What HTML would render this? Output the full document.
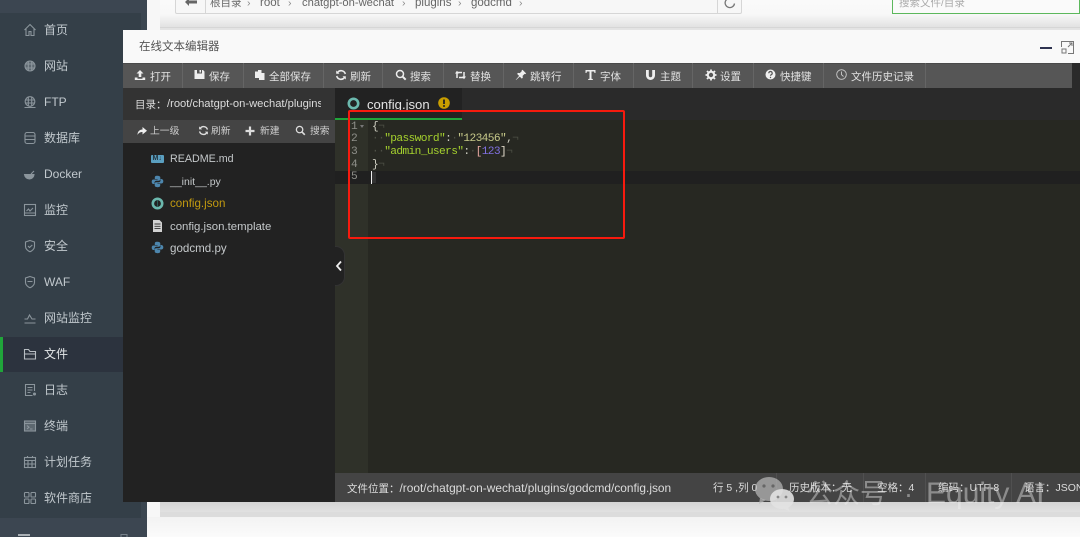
<!DOCTYPE html>
<html lang="zh"><head><meta charset="utf-8"><title>在线文本编辑器</title>
<style>
*{box-sizing:border-box}
html,body{margin:0;padding:0;width:1080px;height:537px;overflow:hidden;background:#fff}
body{position:relative;font-family:"Liberation Sans","Noto Sans CJK SC",sans-serif;filter:blur(.3px)}
.a,.t,svg{position:absolute}
.t{white-space:nowrap;line-height:14px}
.m{font-size:12px;color:#c2c9ce;left:44px}
.i{left:22px;margin-top:-1px;width:16px;height:16px;fill:none;stroke:#8b959c;stroke-width:1.1}
.b{font-size:10.5px;color:#e2e2e2;top:70px}
.s{top:63px;width:1px;height:25px;background:#656565}
.w{fill:#eee;stroke:none}
.f{font-size:11.6px;color:#c5c9cb;left:170px}
.c{font:11.2px/13px "Liberation Mono",monospace;letter-spacing:-.62px;left:372px;color:#cfcfc2}
.n{font:11.2px/13px "Liberation Mono",monospace;left:351px;color:#8f908a}
.st{font-size:10.5px;color:#dcdcdc;top:481px}
.d{color:#4e5046}
.x{font-size:10.5px;color:#888;top:-4px}
.tb{font-size:9.8px;color:#ccc;top:125px}
</style></head><body>

<!-- page background -->
<div class="a" style="left:147px;top:0;width:933px;height:537px;background:#f7f7f7"></div>
<div class="a" style="left:160px;top:0;width:920px;height:30px;background:linear-gradient(#fafafa 0,#f8f8f8 14px,#e2e2e2 27px,#e4e4e4 30px)"></div>
<div class="a" style="left:160px;top:27px;width:920px;height:1px;background:#d6d6d6"></div>
<div class="a" style="left:160px;top:502px;width:920px;height:11px;background:linear-gradient(#d4d4d4,#e2e2e2)"></div>
<div class="a" style="left:160px;top:512px;width:920px;height:5px;background:#dcdcdc"></div>
<div class="a" style="left:147px;top:517px;width:933px;height:20px;background:linear-gradient(#f3f3f3,#fbfbfb)"></div>

<!-- breadcrumbs -->
<div class="a" style="left:175px;top:-6px;width:567px;height:20px;background:#f7f7f7;border:1px solid #d6d6d6;border-radius:2px"></div>
<div class="a" style="left:205px;top:-6px;width:1px;height:20px;background:#d6d6d6"></div>
<div class="a" style="left:717px;top:-6px;width:1px;height:20px;background:#d6d6d6"></div>
<svg style="left:184px;top:-3px" width="14" height="10" viewBox="0 0 14 10"><path d="M1 5l4-4v2.500h8v3H5V9z" fill="#666"/></svg>
<div class="t" style="left:210px;top:-4px;font-size:10.500px;color:#666">根目录</div>
<div class="t x" style="left:247px">›</div>
<div class="t" style="left:260px;top:-4px;font-size:11.500px;color:#666">root</div>
<div class="t x" style="left:288px">›</div>
<div class="t" style="left:302px;top:-4px;font-size:11.200px;color:#666">chatgpt-on-wechat</div>
<div class="t x" style="left:402px">›</div>
<div class="t" style="left:415px;top:-4px;font-size:11.500px;color:#666">plugins</div>
<div class="t x" style="left:458px">›</div>
<div class="t" style="left:471px;top:-4px;font-size:11.500px;color:#666">godcmd</div>
<div class="t x" style="left:519px">›</div>
<svg style="left:723px;top:-4px" width="14" height="14" viewBox="0 0 14 14"><path d="M11.500 7.500A4.700 4.700 0 1 1 9.500 3" fill="none" stroke="#777" stroke-width="1.300"/></svg>
<div class="a" style="left:892px;top:-6px;width:188px;height:20px;background:#fafafa;border:1px solid #5cb85c"></div>
<div class="t" style="left:899px;top:-4px;font-size:10.500px;color:#aaa">搜索文件/目录</div>

<!-- sidebar -->
<div class="a" style="left:0;top:0;width:147px;height:537px;background:#343f48"></div>
<div class="a" style="left:0;top:0;width:147px;height:13px;background:#3c4651"></div>
<div class="a" style="left:141px;top:13px;width:6px;height:505px;background:#3b4650"></div>
<div class="a" style="left:0;top:518px;width:147px;height:19px;background:#3c4651"></div>
<div class="a" style="left:0;top:337px;width:147px;height:35px;background:#2c333e"></div>
<div class="a" style="left:0;top:337px;width:3px;height:35px;background:#20a53a"></div>
<div class="a" style="left:18px;top:534px;width:12px;height:2px;background:#aab0b5"></div>
<svg style="left:119px;top:533px" width="10" height="4" viewBox="0 0 10 4"><path d="M2 4V1.500h6V4" fill="none" stroke="#77818a"/></svg>

<svg class="i" style="top:23px" viewBox="0 0 16 16"><path d="M2.500 8L8 2.500 13.500 8M4 7v6.500h3v-4h2v4h3V7"/></svg>
<div class="t m" style="top:23px">首页</div>
<svg class="i" style="top:59px" viewBox="0 0 16 16"><circle cx="8" cy="8" r="5" fill="#5d6870"/><path d="M3 6h10M3 10h10M6.300 3v10M9.700 3v10"/></svg>
<div class="t m" style="top:59px">网站</div>
<svg class="i" style="top:95px" viewBox="0 0 16 16"><circle cx="8" cy="7.500" r="4.800"/><path d="M3 6h10M3 9h10M6.300 3v9M9.700 3v9M2.500 13.500h11"/></svg>
<div class="t m" style="top:95px">FTP</div>
<svg class="i" style="top:131px" viewBox="0 0 16 16"><rect x="3" y="2.500" width="10" height="11" rx="2"/><path d="M3 6h10M3 9.500h10"/></svg>
<div class="t m" style="top:131px">数据库</div>
<svg class="i" style="top:167px" viewBox="0 0 16 16"><path d="M2.500 8.500h9.500A4.800 4.800 0 0 1 7.500 13 5 5 0 0 1 2.500 8.500zM9 8l3-3" fill="#8b959c"/></svg>
<div class="t m" style="top:167px">Docker</div>
<svg class="i" style="top:203px" viewBox="0 0 16 16"><rect x="2.500" y="2.500" width="11" height="11"/><path d="M4.500 9l2-2 1.500 2 3-3M2.500 11h11"/></svg>
<div class="t m" style="top:203px">监控</div>
<svg class="i" style="top:239px" viewBox="0 0 16 16"><path d="M8 2.500l4.500 1.500v4.500c0 2.500-2.500 4.500-4.500 5.300-2-.8-4.500-2.800-4.500-5.300V4zM6 8l1.500 1.500L10.300 7"/></svg>
<div class="t m" style="top:239px">安全</div>
<svg class="i" style="top:275px" viewBox="0 0 16 16"><path d="M8 2.500l4.500 1.500v4.500c0 2.500-2.500 4.500-4.500 5.300-2-.8-4.500-2.800-4.500-5.300V4zM5.500 7.500h5"/></svg>
<div class="t m" style="top:275px">WAF</div>
<svg class="i" style="top:311px" viewBox="0 0 16 16"><path d="M2.500 9h3L7.500 5 10 9h3.500M2.500 13h11"/></svg>
<div class="t m" style="top:311px">网站监控</div>
<svg class="i" style="top:347px;stroke:#b8bec3" viewBox="0 0 16 16"><path d="M2.500 13V3.500h4L8 5.500h5.500V13zM2.500 8h11"/></svg>
<div class="t m" style="top:347px;color:#e4e7e9">文件</div>
<svg class="i" style="top:383px" viewBox="0 0 16 16"><path d="M12.500 9V2.500h-9v11h7M5.500 5.500h5M5.500 8h5M5.500 10.500h3"/><circle cx="12.500" cy="12" r="1" fill="#8b959c"/></svg>
<div class="t m" style="top:383px">日志</div>
<svg class="i" style="top:419px" viewBox="0 0 16 16"><rect x="2.500" y="3" width="11" height="10" fill="#5d6870"/><path d="M2.500 5.500h11M5 7.500L7 9.300 5 11M8 11h2.500"/></svg>
<div class="t m" style="top:419px">终端</div>
<svg class="i" style="top:455px" viewBox="0 0 16 16"><rect x="2.500" y="3.500" width="11" height="10"/><path d="M2.500 6.500h11M5.500 2v2M10.500 2v2M2.500 10h11M6 6.500v7M10 6.500v7"/></svg>
<div class="t m" style="top:455px">计划任务</div>
<svg class="i" style="top:491px" viewBox="0 0 16 16"><rect x="2.500" y="2.500" width="4.500" height="4.500" rx=".8"/><rect x="9" y="2.500" width="4.500" height="4.500" rx=".8"/><rect x="2.500" y="9" width="4.500" height="4.500" rx=".8"/><rect x="9" y="9" width="4.500" height="4.500" rx=".8"/></svg>
<div class="t m" style="top:491px">软件商店</div>

<!-- modal -->
<div class="a" style="left:123px;top:30px;width:957px;height:472px;background:#2a2a2a"></div>
<div class="a" style="left:123px;top:30px;width:957px;height:33px;background:#f9f9f9"></div>
<div class="t" style="left:139px;top:40px;font-size:11.500px;color:#555">在线文本编辑器</div>
<div class="a" style="left:1040px;top:47px;width:12px;height:2px;background:#2e3350"></div>
<svg style="left:1061px;top:41px" width="13" height="13" viewBox="0 0 13 13"><path d="M.5 6V.5h12v12H7M7 6l4-4M8 2h3v3" fill="none" stroke="#777"/><rect x="1" y="8" width="4" height="4" fill="none" stroke="#777"/></svg>

<!-- toolbar -->
<div class="a" style="left:123px;top:63px;width:949px;height:25px;background:#565656;border-top:1px solid #4a4a4a"></div>
<div class="a s" style="left:182px"></div><div class="a s" style="left:243px"></div><div class="a s" style="left:323px"></div><div class="a s" style="left:382px"></div><div class="a s" style="left:443px"></div><div class="a s" style="left:503px"></div><div class="a s" style="left:573px"></div><div class="a s" style="left:633px"></div><div class="a s" style="left:692px"></div><div class="a s" style="left:753px"></div><div class="a s" style="left:823px"></div><div class="a s" style="left:925px"></div>

<svg class="w" style="left:134px;top:69px" width="12" height="12" viewBox="0 0 12 12"><path d="M6 1l3.500 3.500H7.300V8H4.700V4.500H2.500zM.8 8.500H3.500V9.800h5V8.500h2.700V11H.8z"/></svg>
<div class="t b" style="left:150px">打开</div>
<svg class="w" style="left:194px;top:69px" width="11" height="11" viewBox="0 0 11 11"><path d="M.5 1H3v3.500h5V1h1l1.500 1.500V10H.5zM5.500 1h1.500v2.500H5.500z"/></svg>
<div class="t b" style="left:209px">保存</div>
<svg class="w" style="left:254px;top:69px" width="12" height="12" viewBox="0 0 12 12"><path d="M1 2.500h3V1h3.500v3H10.500v7H5V9H1z"/></svg>
<div class="t b" style="left:269px">全部保存</div>
<svg style="left:335px;top:69px" width="12" height="12" viewBox="0 0 12 12"><path d="M10.300 5A4.400 4.400 0 0 0 2.500 3.500M1.700 7a4.400 4.400 0 0 0 7.800 1.500" fill="none" stroke="#eee" stroke-width="1.500"/><path d="M1.200 1.500v3.300h3.300zM10.800 10.500V7.200H7.500z" fill="#eee"/></svg>
<div class="t b" style="left:350px">刷新</div>
<svg style="left:395px;top:69px" width="12" height="12" viewBox="0 0 12 12"><circle cx="5" cy="5" r="3.500" fill="none" stroke="#eee" stroke-width="1.500"/><path d="M7.700 7.700l3 3" stroke="#eee" stroke-width="2"/></svg>
<div class="t b" style="left:410px">搜索</div>
<svg style="left:454px;top:69px" width="13" height="12" viewBox="0 0 13 12"><path d="M3 9V3.500h5M10 3v5.500H5" fill="none" stroke="#eee" stroke-width="1.500"/><path d="M1 4.500h4L3 1.800zM12 7.500H8l2 2.700z" fill="#eee"/></svg>
<div class="t b" style="left:470px">替换</div>
<svg class="w" style="left:515px;top:69px" width="12" height="12" viewBox="0 0 12 12"><path d="M7.500.8l3.700 3.700-1 .6-.6-.2-2 2 .2 1.800-1 .9-2-2L1 11 .8 10.800l3.300-3.900-2-2 .9-1 1.800.2 2-2-.2-.6z"/></svg>
<div class="t b" style="left:530px">跳转行</div>
<svg class="w" style="left:585px;top:69px" width="11" height="12" viewBox="0 0 11 12"><path d="M.5 1h10v3h-1l-.4-1.500H6.500v7.200l1.300.3v1H3.200v-1l1.300-.3V2.500H1.900L1.500 4h-1z"/></svg>
<div class="t b" style="left:600px">字体</div>
<svg class="w" style="left:645px;top:69px" width="11" height="12" viewBox="0 0 11 12"><path d="M1 1h2.800v5.500a1.700 1.700 0 0 0 3.400 0V1H10v5.500a4.500 4.500 0 0 1-9 0z"/></svg>
<div class="t b" style="left:660px">主题</div>
<svg style="left:705px;top:69px" width="12" height="12" viewBox="0 0 12 12"><circle cx="6" cy="6" r="3.200" fill="none" stroke="#eee" stroke-width="2"/><path d="M6 .5v2M6 9.500v2M.5 6h2M9.500 6h2M2 2l1.500 1.500M8.500 8.500L10 10M10 2L8.500 3.500M3.500 8.500L2 10" stroke="#eee" stroke-width="1.800"/></svg>
<div class="t b" style="left:720px">设置</div>
<svg style="left:765px;top:69px" width="11" height="11" viewBox="0 0 11 11"><circle cx="5.500" cy="5.500" r="5" fill="#eee"/><path d="M3.800 4.200a1.700 1.700 0 1 1 2.500 1.500c-.6.300-.8.600-.8 1" fill="none" stroke="#565656" stroke-width="1.200"/><circle cx="5.500" cy="8.500" r=".7" fill="#565656"/></svg>
<div class="t b" style="left:780px">快捷键</div>
<svg style="left:836px;top:69px" width="11" height="11" viewBox="0 0 11 11"><circle cx="5.500" cy="5.500" r="4.800" fill="none" stroke="#ccc" stroke-width=".9"/><path d="M5.500 2.500v3.200l2 1.800" fill="none" stroke="#ccc" stroke-width=".9"/></svg>
<div class="t b" style="left:851px">文件历史记录</div>

<!-- left panel -->
<div class="a" style="left:123px;top:88px;width:212px;height:414px;background:#222"></div>
<div class="a" style="left:123px;top:88px;width:212px;height:32px;background:#333"></div>
<div class="a" style="left:123px;top:120px;width:212px;height:23px;background:#444"></div>
<div class="t" style="left:135px;top:98px;font-size:10.500px;color:#dcdcdc">目录：</div>
<div class="t" style="left:167px;top:97px;width:154px;overflow:hidden;font-size:11.200px;color:#dcdcdc">/root/chatgpt-on-wechat/plugins/godcmd</div>

<svg class="w" style="left:137px;top:126px" width="10" height="10" viewBox="0 0 10 10"><path d="M5.500 1L10 4.700 5.500 8.500V6C3 6 1.500 7 .5 9 .5 5.500 2.500 3.500 5.500 3.500z"/></svg>
<div class="t tb" style="left:150px">上一级</div>
<svg style="left:198px;top:125px" width="11" height="11" viewBox="0 0 12 12"><path d="M10.300 5A4.400 4.400 0 0 0 2.500 3.500M1.700 7a4.400 4.400 0 0 0 7.800 1.500" fill="none" stroke="#ddd" stroke-width="1.500"/><path d="M1.200 1.500v3.300h3.300zM10.800 10.500V7.200H7.500z" fill="#ddd"/></svg>
<div class="t tb" style="left:211px">刷新</div>
<svg style="left:245px;top:126px" width="10" height="10" viewBox="0 0 10 10"><path d="M5 .5v9M.5 5h9" stroke="#ddd" stroke-width="2.200"/></svg>
<div class="t tb" style="left:260px">新建</div>
<svg style="left:295px;top:125px" width="11" height="11" viewBox="0 0 12 12"><circle cx="5" cy="5" r="3.500" fill="none" stroke="#ddd" stroke-width="1.400"/><path d="M7.700 7.700l3 3" stroke="#ddd" stroke-width="1.800"/></svg>
<div class="t tb" style="left:310px">搜索</div>

<div class="a" style="left:151px;top:155px;width:13px;height:8px;background:#5a9fc0;border-radius:1px"></div>
<div class="t" style="left:152.500px;top:155px;font:bold 7px/8px 'Liberation Sans',sans-serif;color:#22323c">M↓</div>
<div class="t f" style="top:152px;font-size:10.700px">README.md</div>

<svg style="left:151px;top:175px" width="13" height="13" viewBox="0 0 13 13"><path d="M6.300.8C4.300.8 3.800 1.600 3.800 2.600V4h2.800v.5H2.500C1.200 4.500.7 5.500.7 6.700S1.300 9 2.500 9h1V7.500c0-1 .9-1.800 1.900-1.800h2.500c.9 0 1.400-.6 1.400-1.400V2.600C9.300 1.500 8.300.8 6.300.8z" fill="#4d86ad"/><path d="M6.700 12.200c2 0 2.500-.8 2.500-1.800V9H6.400v-.5h4.100c1.300 0 1.800-1 1.800-2.200S11.700 4 10.500 4h-1v1.500c0 1-.9 1.800-1.900 1.800H5.100c-.9 0-1.400.6-1.400 1.400v1.700c0 1.100 1 1.800 3 1.800z" fill="#4d86ad"/></svg>
<div class="t f" style="top:175px;font-size:10.500px">__init__.py</div>

<svg style="left:151px;top:197px" width="13" height="13" viewBox="0 0 13 13"><circle cx="6.500" cy="6.500" r="4.700" fill="none" stroke="#6bb8ad" stroke-width="2.600"/><path d="M6.500 3.500v6" stroke="#2a5c56" stroke-width="1"/></svg>
<div class="t f" style="top:197px;color:#c29a10">config.json</div>

<svg style="left:151px;top:219px" width="13" height="14" viewBox="0 0 13 14"><path d="M2 1h6.500L11 3.500V13H2z" fill="#d2d2d2"/><path d="M3.500 5h6M3.500 7.300h6M3.500 9.600h6" stroke="#333" stroke-width=".9"/></svg>
<div class="t f" style="top:220px;font-size:11.400px">config.json.template</div>

<svg style="left:151px;top:241px" width="13" height="13" viewBox="0 0 13 13"><path d="M6.300.8C4.300.8 3.800 1.600 3.800 2.600V4h2.800v.5H2.500C1.200 4.500.7 5.500.7 6.700S1.300 9 2.500 9h1V7.500c0-1 .9-1.800 1.900-1.800h2.500c.9 0 1.400-.6 1.400-1.400V2.600C9.300 1.500 8.300.8 6.300.8z" fill="#4d86ad"/><path d="M6.700 12.200c2 0 2.500-.8 2.500-1.800V9H6.400v-.5h4.100c1.300 0 1.800-1 1.800-2.200S11.700 4 10.500 4h-1v1.500c0 1-.9 1.800-1.900 1.800H5.100c-.9 0-1.400.6-1.400 1.400v1.700c0 1.100 1 1.800 3 1.800z" fill="#4d86ad"/></svg>
<div class="t f" style="top:242px">godcmd.py</div>

<!-- tabs -->
<div class="a" style="left:335px;top:88px;width:745px;height:32px;background:#2a2a2a"></div>
<div class="a" style="left:335px;top:88px;width:127px;height:32px;background:#222"></div>
<div class="a" style="left:335px;top:118px;width:127px;height:2px;background:#20a53a"></div>
<svg style="left:347px;top:97px" width="13" height="13" viewBox="0 0 13 13"><circle cx="6.500" cy="6.500" r="4.700" fill="none" stroke="#6bb8ad" stroke-width="2.600"/></svg>
<div class="t" style="left:367px;top:98px;font-size:13.100px;color:#e4e4e4">config.json</div>
<svg style="left:438px;top:97px" width="12" height="12" viewBox="0 0 12 12"><circle cx="6" cy="6" r="5.800" fill="#c99e00"/><path d="M6 2.500v4.500" stroke="#222" stroke-width="1.800"/><circle cx="6" cy="9" r="1" fill="#222"/></svg>

<!-- editor -->
<div class="a" style="left:335px;top:120px;width:745px;height:353px;background:#272822"></div>
<div class="a" style="left:335px;top:120px;width:33px;height:353px;background:#2f3129"></div>
<div class="a" style="left:335px;top:171px;width:745px;height:13px;background:#202020"></div>
<div class="t n" style="top:121px">1</div><div class="t n" style="top:133px">2</div><div class="t n" style="top:146px">3</div><div class="t n" style="top:159px">4</div><div class="t n" style="top:171px">5</div>
<div class="a" style="left:360px;top:125px;border:2.500px solid transparent;border-top:3px solid #777"></div>
<div class="t c" style="top:121px">{<span class="d">¬</span></div>
<div class="t c" style="top:133px"><span class="d">··</span><span style="color:#a6d22e">"password"</span>:<span class="d">·</span><span style="color:#c7c98a">"123456"</span>,<span class="d">¬</span></div>
<div class="t c" style="top:146px"><span class="d">··</span><span style="color:#a6d22e">"admin_users"</span>:<span class="d">·</span><span style="color:#e8a8a0">[</span><span style="color:#8070e0">123</span><span style="color:#e8e0d0">]</span><span class="d">¬</span></div>
<div class="t c" style="top:159px">}<span class="d">¬</span></div>
<div class="a" style="left:371px;top:171px;width:1px;height:13px;background:#eee"></div>
<div class="a" style="left:372px;top:172px;width:4px;height:11px;background:#333"></div>

<!-- collapse handle -->
<div class="a" style="left:335px;top:246px;width:10px;height:40px;background:#222;border:1px solid #333;border-left:0;border-radius:0 9px 9px 0"></div>
<svg style="left:335px;top:260px" width="8" height="12" viewBox="0 0 8 12"><path d="M6 1.500L2 6l4 4.500" fill="none" stroke="#eee" stroke-width="1.800"/></svg>

<!-- status bar -->
<div class="a" style="left:335px;top:473px;width:745px;height:29px;background:#444"></div>
<div class="a" style="left:776px;top:473px;width:1px;height:29px;background:#505050"></div>
<div class="a" style="left:863px;top:473px;width:1px;height:29px;background:#505050"></div>
<div class="a" style="left:925px;top:473px;width:1px;height:29px;background:#505050"></div>
<div class="a" style="left:1011px;top:473px;width:1px;height:29px;background:#505050"></div>
<div class="t st" style="left:347px">文件位置：<span style="font-size:11.900px">/root/chatgpt-on-wechat/plugins/godcmd/config.json</span></div>
<div class="t st" style="left:713px">行 5 ,列 0</div>
<div class="t st" style="left:789px">历史版本：无</div>
<div class="t st" style="left:877px">空格：4</div>
<div class="t st" style="left:938px">编码：UTF-8</div>
<div class="t st" style="left:1024px">语言：JSON</div>

<!-- red annotation -->
<div class="a" style="left:348px;top:110px;width:277px;height:129px;border:2px solid #f71a0e;border-radius:2px"></div>

<!-- watermark -->
<svg style="left:754px;top:475px" width="42" height="38" viewBox="0 0 42 38"><ellipse cx="15" cy="14" rx="14" ry="12" fill="#bbb" opacity=".7"/><path d="M6 23l-1 6 7-4z" fill="#bbb" opacity=".7"/><ellipse cx="28" cy="24" rx="12" ry="10" fill="#e2e2e2" opacity=".9"/><path d="M34 32l2 5-7-4z" fill="#e2e2e2" opacity=".9"/><circle cx="10" cy="11" r="1.600" fill="#666"/><circle cx="19" cy="11" r="1.600" fill="#666"/><circle cx="24" cy="22" r="1.400" fill="#888"/><circle cx="32" cy="22" r="1.400" fill="#888"/></svg>
<div class="t" style="left:806px;top:477px;line-height:34px;font-size:27px;color:rgba(240,240,240,.42)">公众号</div>
<div class="t" style="left:904px;top:477px;line-height:34px;font-size:27px;color:rgba(240,240,240,.42)">·</div>
<div class="t" style="left:926px;top:477px;line-height:34px;font-size:30px;color:rgba(240,240,240,.42)">Equity AI</div>
</body></html>
